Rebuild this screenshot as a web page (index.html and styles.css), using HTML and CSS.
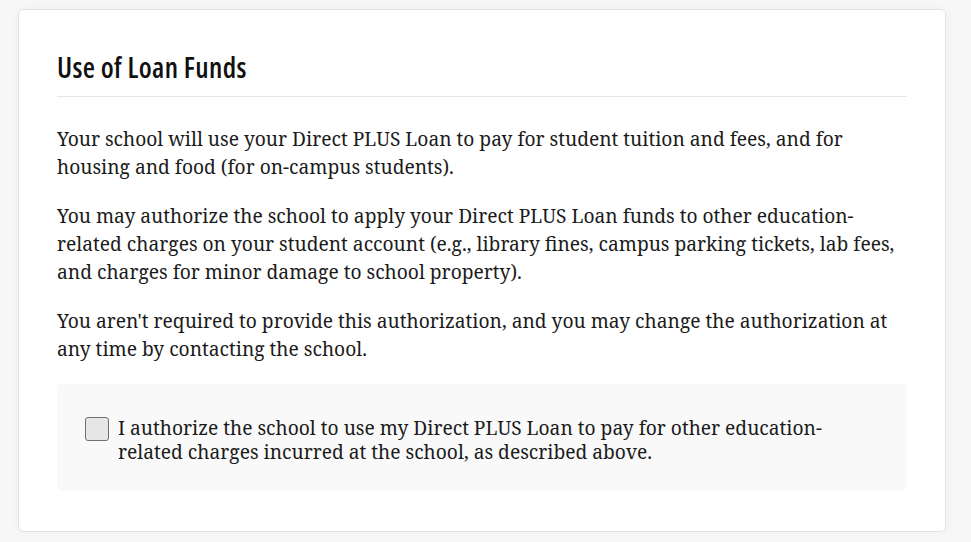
FILE: index.html
```html
<!DOCTYPE html>
<html lang="en">
<head>
<meta charset="utf-8">
<title>Use of Loan Funds</title>
<link rel="stylesheet" href="styles.css">
</head>
<body>
<main class="page">
  <section class="card">
    <h2 class="card-title">Use of Loan Funds</h2>
    <p class="para">Your school will use your Direct PLUS Loan to pay for student tuition and fees, and for housing and food (for on-campus students).</p>
    <p class="para">You may authorize the school to apply your Direct PLUS Loan funds to other education-related charges on your student account (e.g., library fines, campus parking tickets, lab fees, and charges for minor damage to school property).</p>
    <p class="para">You aren't required to provide this authorization, and you may change the authorization at any time by contacting the school.</p>
    <div class="consent">
      <label class="consent-row">
        <input type="checkbox" class="consent-box">
        <span class="consent-text">I authorize the school to use my Direct PLUS Loan to pay for other education-related charges incurred at the school, as described above.</span>
      </label>
    </div>
  </section>
</main>
</body>
</html>
```
FILE: styles.css
```css
html, body {
  margin: 0;
  padding: 0;
  background: #f7f7f7;
}
.page {
  padding: 9px 25px 10px 18px;
}
.card {
  background: #fff;
  border: 1px solid #e2e2e2;
  border-radius: 5px;
  padding: 39px 38px 40px 38px;
  box-shadow: 0 0 12px rgba(0,0,0,0.03);
}
.card-title {
  margin: 0 0 28px;
  padding-bottom: 11px;
  border-bottom: 1px solid #e6e6e6;
  font-family: "Open Sans", "Roboto", sans-serif;
  font-stretch: 75%;
  font-weight: 600;
  font-size: 28px;
  line-height: 36px;
  letter-spacing: 0.35px;
  color: #111;
}
.para {
  margin: 0 0 21px;
  font-family: "Noto Serif", "DejaVu Serif", serif;
  font-size: 19.2px;
  line-height: 28px;
  color: #1b1b1b;
}
.consent {
  background: #f9f9f9;
  border-radius: 5px;
  padding: 32px 28px 27px;
}
.consent-row {
  display: flex;
  align-items: flex-start;
  gap: 9px;
}
.consent-box {
  appearance: none;
  -webkit-appearance: none;
  margin: 1px 0 0;
  width: 24px;
  height: 24px;
  flex: none;
  background: #e5e6e8;
  border: 1px solid #6f6f6f;
  border-radius: 3px;
}
.consent-text {
  font-family: "Noto Serif", "DejaVu Serif", serif;
  font-size: 19.2px;
  line-height: 24px;
  color: #1b1b1b;
}
```
